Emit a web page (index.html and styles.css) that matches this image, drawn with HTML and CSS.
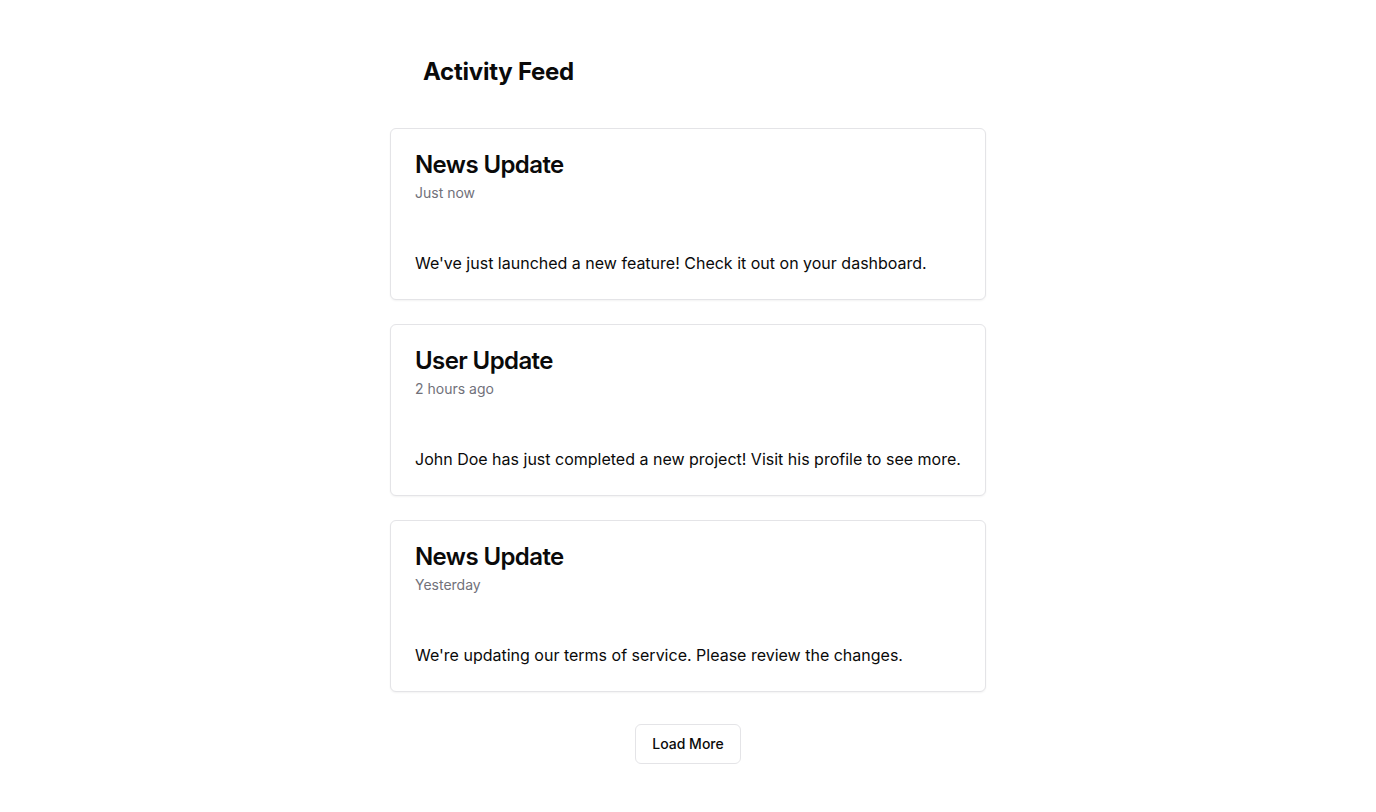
FILE: index.html
```html
<!DOCTYPE html>
<html lang="en">
<head>
<meta charset="utf-8">
<title>Activity Feed</title>
<link rel="stylesheet" href="styles.css">
</head>
<body>
<main class="page">
  <h1 class="page-title">Activity Feed</h1>
  <div class="feed">
    <div class="card">
      <div class="card-header">
        <h3 class="card-title">News Update</h3>
        <p class="card-desc">Just now</p>
      </div>
      <div class="card-content">
        <p>We've just launched a new feature! Check it out on your dashboard.</p>
      </div>
    </div>
    <div class="card">
      <div class="card-header">
        <h3 class="card-title">User Update</h3>
        <p class="card-desc">2 hours ago</p>
      </div>
      <div class="card-content">
        <p>John Doe has just completed a new project! Visit his profile to see more.</p>
      </div>
    </div>
    <div class="card">
      <div class="card-header">
        <h3 class="card-title">News Update</h3>
        <p class="card-desc">Yesterday</p>
      </div>
      <div class="card-content">
        <p>We're updating our terms of service. Please review the changes.</p>
      </div>
    </div>
  </div>
  <div class="actions">
    <button class="btn" type="button">Load More</button>
  </div>
</main>
</body>
</html>
```

FILE: styles.css
```css
* { box-sizing: border-box; }
html, body { margin: 0; padding: 0; background: #ffffff; }
body {
  font-family: Inter, "Noto Sans", "Liberation Sans", sans-serif;
  color: #0a0a0a;
}
.page {
  width: 596px;
  margin: 0 auto;
  padding-top: 56px;
}
.page-title {
  margin: 0 0 40px 0;
  padding-left: 33px;
  font-size: 24px;
  line-height: 32px;
  font-weight: 700;
  letter-spacing: -0.25px;
  color: #0a0a0a;
}
.feed {
  display: flex;
  flex-direction: column;
  gap: 24px;
}
.card {
  border: 1px solid #e4e4e7;
  border-radius: 6px;
  background: #fff;
  box-shadow: 0 1px 2px 0 rgba(0,0,0,0.05);
}
.card-header {
  padding: 24px;
  display: flex;
  flex-direction: column;
  gap: 6px;
}
.card-title {
  margin: 0;
  font-size: 24px;
  line-height: 24px;
  font-weight: 600;
  letter-spacing: -0.6px;
  color: #0a0a0a;
}
.card-desc {
  margin: 0;
  font-size: 14px;
  line-height: 20px;
  color: #71717a;
}
.card-content {
  padding: 24px;
}
.card-content p {
  margin: 0;
  font-size: 16px;
  line-height: 24px;
  color: #0a0a0a;
}
.actions {
  display: flex;
  justify-content: center;
  margin-top: 32px;
}
.btn {
  height: 40px;
  padding: 8px 16px;
  border: 1px solid #e4e4e7;
  border-radius: 6px;
  background: #fff;
  font-family: inherit;
  font-size: 14px;
  font-weight: 500;
  line-height: 20px;
  color: #0a0a0a;
  cursor: pointer;
}
```
